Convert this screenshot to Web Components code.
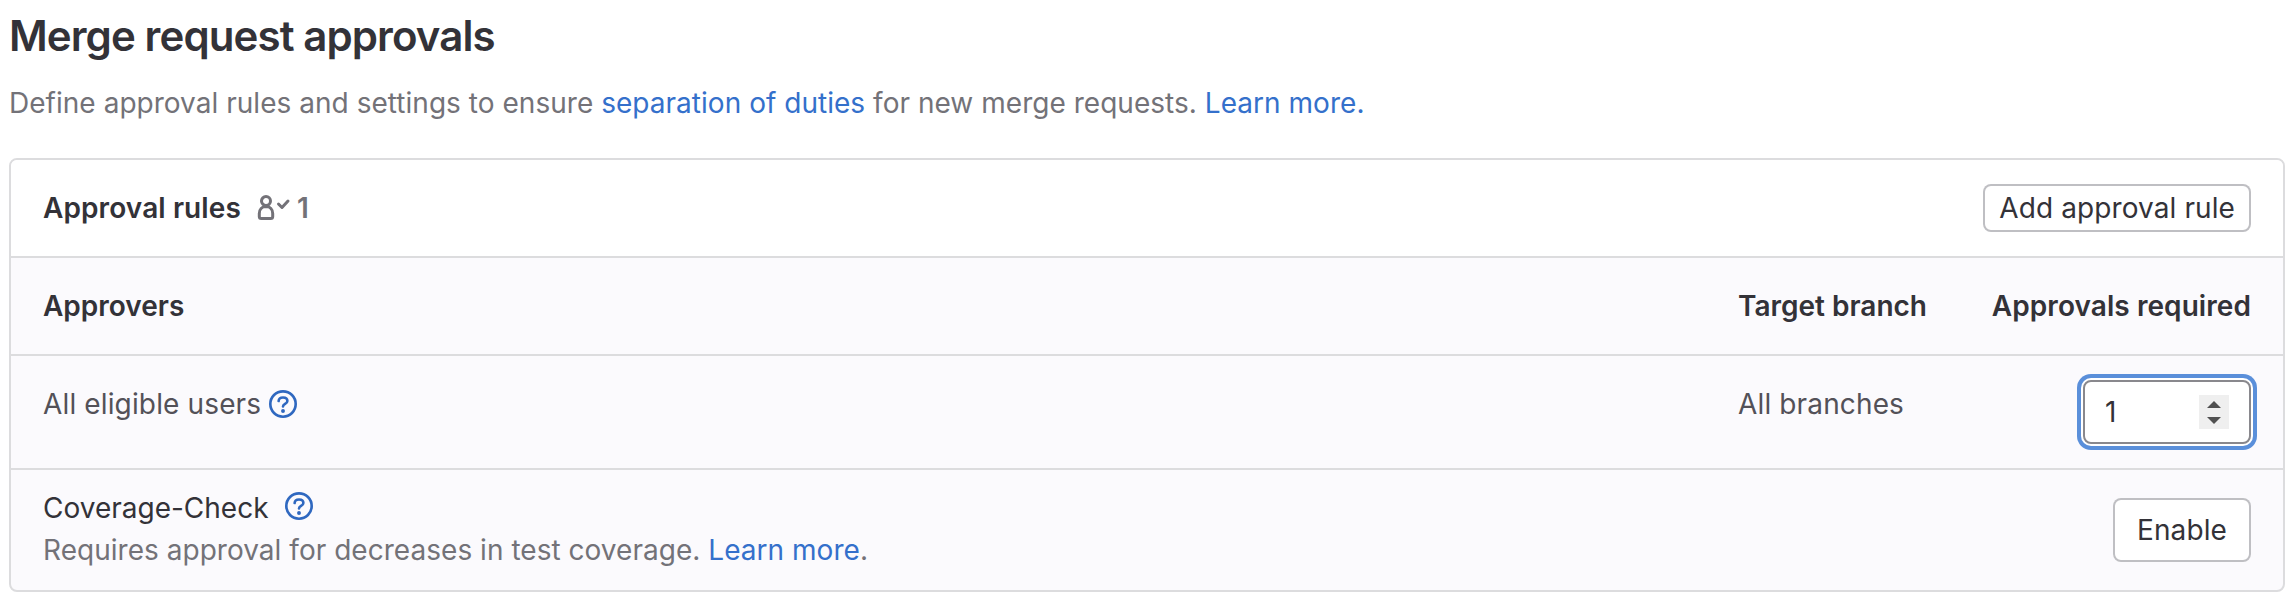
<!DOCTYPE html>
<html lang="en">
<head>
<meta charset="UTF-8">
<title>Merge request approvals</title>
<style>
    body {
        margin: 0;
        background: #fff;
        color: #333238;
        font-family: Inter, "Noto Sans", sans-serif;
        font-size: 28px;
        line-height: 40px;
    }
</style>
</head>
<body>
<settings-section>
    <span slot="title">Merge request approvals</span>
    <span slot="description">Define approval rules and settings to ensure <app-link>separation of duties</app-link> for new merge requests. <app-link>Learn more.</app-link></span>
    <approval-card>
        <span slot="title">Approval rules</span>
        <approval-count slot="count">1</approval-count>
        <app-button slot="action" size="small">Add approval rule</app-button>
        <rule-row class="head">
            <span>Approvers</span>
            <span slot="branch">Target branch</span>
            <span slot="required">Approvals required</span>
        </rule-row>
        <rule-row class="rule">
            <span>All eligible users</span> <help-icon></help-icon>
            <span slot="branch">All branches</span>
            <number-input slot="required" value="1"></number-input>
        </rule-row>
        <check-row>
            <span slot="name">Coverage-Check</span>
            <span slot="description">Requires approval for decreases in test coverage. <app-link>Learn more</app-link>.</span>
            <app-button slot="action">Enable</app-button>
        </check-row>
    </approval-card>
</settings-section>

<script>
class BaseElement extends HTMLElement {
    constructor() {
        super();
        this.attachShadow({ mode: 'open' });
    }

    connectedCallback() {
        this.shadowRoot.innerHTML = this.render().trim();
    }
}

class SettingsSection extends BaseElement {
    render() {
        return `
            <style>
                :host {
                    display: block;
                    padding: 12px 11px 12px 9px;
                }
                h2 {
                    margin: 0;
                    font-size: 42px;
                    font-weight: 600;
                    line-height: 48px;
                    letter-spacing: -0.9px;
                }
                p {
                    margin: 23px 0 35px;
                    color: #737278;
                    letter-spacing: 0.03px;
                }
            </style>
            <h2><slot name="title"></slot></h2>
            <p><slot name="description"></slot></p>
            <slot></slot>
        `;
    }
}

class ApprovalCard extends BaseElement {
    render() {
        return `
            <style>
                :host {
                    display: block;
                    border: 2px solid #dcdcde;
                    border-radius: 8px;
                    overflow: hidden;
                    background: #fbfafd;
                }
                header {
                    display: flex;
                    align-items: center;
                    height: 96px;
                    padding: 0 32px;
                    background: #fff;
                }
                h3 {
                    margin: 0 16px 0 0;
                    font-size: 28px;
                    font-weight: 600;
                    letter-spacing: 0.1px;
                }
                slot[name="action"] {
                    display: block;
                    margin-left: auto;
                }
            </style>
            <header>
                <h3><slot name="title"></slot></h3>
                <slot name="count"></slot>
                <slot name="action"></slot>
            </header>
            <slot></slot>
        `;
    }
}

class ApprovalCount extends BaseElement {
    render() {
        return `
            <style>
                :host {
                    display: flex;
                    align-items: center;
                    gap: 8px;
                    color: #737278;
                    font-weight: 600;
                }
                svg {
                    display: block;
                    overflow: visible;
                    fill: none;
                    stroke: currentColor;
                    stroke-width: 3;
                }
            </style>
            <svg width="32" height="32" viewBox="0 0 32 32">
                <circle cx="9" cy="9" r="4.5"/>
                <path d="M9 14.5c-4 0-6.700 3-6.700 7v3q0 2 2 2h9.400q2 0 2-2v-3c0-4-2.700-7-6.700-7z"/>
                <path d="M21.500 12l3.500 3.500 6-6.500" stroke-linecap="round" stroke-linejoin="round"/>
            </svg>
            <slot></slot>
        `;
    }
}

class RuleRow extends BaseElement {
    render() {
        return `
            <style>
                :host {
                    display: grid;
                    grid-template-columns: 1fr 253px 260px;
                    align-items: start;
                    padding: 28px 32px;
                    border-top: 2px solid #dcdcde;
                }
                :host(.head) {
                    font-weight: 600;
                }
                :host(.rule) {
                    padding: 24px 32px;
                    color: #535158;
                }
                :host(.rule) .name,
                :host(.rule) .branch {
                    padding-top: 4px;
                    letter-spacing: 0.14px;
                }
                .required {
                    display: flex;
                    justify-content: flex-end;
                    white-space: nowrap;
                    letter-spacing: 0.07px;
                }
            </style>
            <div class="name"><slot></slot></div>
            <div class="branch"><slot name="branch"></slot></div>
            <div class="required"><slot name="required"></slot></div>
        `;
    }
}

class CheckRow extends BaseElement {
    render() {
        return `
            <style>
                :host {
                    display: flex;
                    align-items: center;
                    justify-content: space-between;
                    height: 120px;
                    padding: 0 32px;
                    border-top: 2px solid #dcdcde;
                }
                .text {
                    padding-bottom: 2px;
                    line-height: 42px;
                }
                .name {
                    display: flex;
                    align-items: center;
                    gap: 16px;
                }
                help-icon {
                    margin-top: -4px;
                }
                .description {
                    color: #737278;
                    letter-spacing: 0.03px;
                }
            </style>
            <div class="text">
                <div class="name"><slot name="name"></slot><help-icon></help-icon></div>
                <div class="description"><slot name="description"></slot></div>
            </div>
            <slot name="action"></slot>
        `;
    }
}

class HelpIcon extends BaseElement {
    render() {
        return `
            <style>
                :host {
                    display: inline-block;
                    vertical-align: -4px;
                    color: #2f68c0;
                    line-height: 0;
                }
            </style>
            <svg width="28" height="28" viewBox="0 0 16 16" fill="none" stroke="currentColor" stroke-width="1.500">
                <circle cx="8" cy="8" r="7.250"/>
                <path d="M5.500 6.300C5.600 5 6.600 4.250 8 4.250c1.500 0 2.500.85 2.500 2 0 1.700-2.500 1.700-2.500 3.200" stroke-linecap="round"/>
                <circle cx="8" cy="12" r="1.100" fill="currentColor" stroke="none"/>
            </svg>
        `;
    }
}

class AppButton extends BaseElement {
    render() {
        return `
            <style>
                :host {
                    display: block;
                }
                button {
                    display: block;
                    height: 64px;
                    padding: 0 24px;
                    border: 0;
                    border-radius: 8px;
                    background: #fff;
                    box-shadow: inset 0 0 0 2px #bfbfc3;
                    color: inherit;
                    font: inherit;
                    letter-spacing: 0.1px;
                    white-space: nowrap;
                }
                :host([size="small"]) button {
                    height: 48px;
                    padding: 0 16px;
                }
            </style>
            <button type="button"><slot></slot></button>
        `;
    }
}

class AppLink extends BaseElement {
    render() {
        // kept on one line so no space ends up after the link
        return `<style>a { color: #3470cb; text-decoration: none; }</style><a href="#"><slot></slot></a>`;
    }
}

class NumberInput extends BaseElement {
    render() {
        return `
            <style>
                :host {
                    display: flex;
                    align-items: center;
                    justify-content: space-between;
                    box-sizing: border-box;
                    width: 168px;
                    height: 64px;
                    padding: 0 20px;
                    border: 2px solid #89888d;
                    border-radius: 8px;
                    background: #fff;
                    box-shadow: 0 0 0 2px #fff, 0 0 0 6px #5a8fda;
                    color: #333238;
                }
                .spin {
                    width: 30px;
                    height: 34px;
                    background: #efefef;
                }
                svg {
                    display: block;
                }
            </style>
            <span>${this.getAttribute('value')}</span>
            <div class="spin">
                <svg width="30" height="34" fill="#505050">
                    <path d="M8 13l7-7 7 7z"/>
                    <path d="M8 22h14l-7 7z"/>
                </svg>
            </div>
        `;
    }
}

customElements.define('settings-section', SettingsSection);
customElements.define('approval-card', ApprovalCard);
customElements.define('approval-count', ApprovalCount);
customElements.define('rule-row', RuleRow);
customElements.define('check-row', CheckRow);
customElements.define('help-icon', HelpIcon);
customElements.define('app-button', AppButton);
customElements.define('app-link', AppLink);
customElements.define('number-input', NumberInput);
</script>
</body>
</html>
